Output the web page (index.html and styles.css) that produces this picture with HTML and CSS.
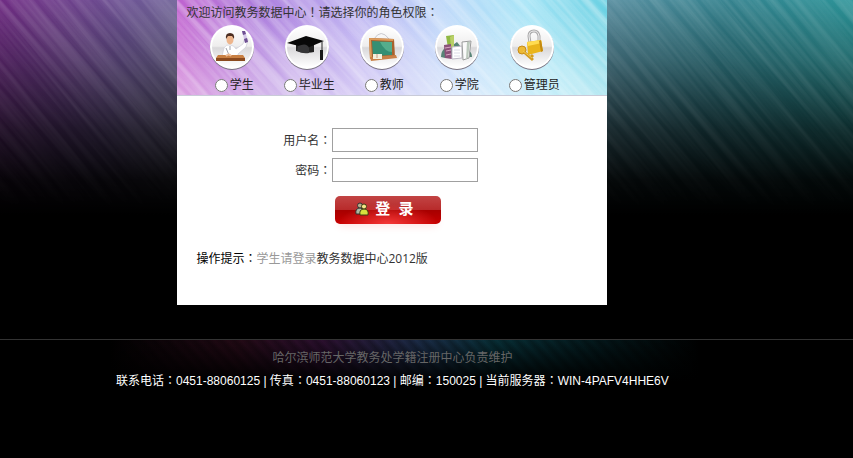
FILE: index.html
```
<!DOCTYPE html>
<html lang="zh-CN">
<head>
<meta charset="utf-8">
<meta name="viewport" content="width=device-width, initial-scale=1">
<title>教务数据中心</title>
<link rel="stylesheet" href="styles.css">
</head>
<body>
<svg class="streaks" aria-hidden="true">
  <defs>
    <filter id="brush" x="0" y="0" width="100%" height="100%">
      <feTurbulence type="fractalNoise" baseFrequency="0.004 0.16" numOctaves="4" seed="4"/>
      <feColorMatrix values="0 0 0 0 1  0 0 0 0 1  0 0 0 0 1  2 0 0 0 -0.6"/>
    </filter>
  </defs>
  <rect x="-600" y="-1400" width="2200" height="2200" filter="url(#brush)" transform="rotate(50)"/>
</svg>
<div class="page">
  <main class="card">
    <form>
      <fieldset class="roles">
        <svg class="roles-texture" aria-hidden="true">
          <rect x="-600" y="-1400" width="2200" height="2200" filter="url(#brush)" transform="rotate(48)"/>
        </svg>
        <legend class="roles-title">欢迎访问教务数据中心<span class="punct" lang="zh-TW">！</span>请选择你的角色权限<span class="punct" lang="zh-TW">：</span></legend>
        <div class="role-list">
          <label class="role">
            <svg class="role-icon" viewBox="0 0 46 46" aria-hidden="true">
              <defs>
                <linearGradient id="disc" x1="0" y1="0" x2="0" y2="1">
                  <stop offset="0" stop-color="#fff"/><stop offset=".48" stop-color="#eeeded"/>
                  <stop offset=".52" stop-color="#d9d8da"/><stop offset="1" stop-color="#fff"/>
                </linearGradient>
              </defs>
              <circle cx="23" cy="24" r="22" fill="#77717f"/>
              <circle cx="23" cy="23" r="22" fill="#fff"/>
              <circle cx="23" cy="23" r="20" fill="url(#disc)"/>
              <path d="M13 32 15 24Q17 20 21 21Q25 21 27 25L34 20 36 13 39 16 37 23 29 30 29 33Z" fill="#fff" stroke="#cdcdd9" stroke-width=".7"/>
              <path d="M17 24 20 31M21 22v4" stroke="#a2a3ad" fill="none"/>
              <ellipse cx="21" cy="15.500" rx="3.500" ry="5" fill="#edb58c"/>
              <path d="M17 15Q16 9 21 9Q26 9 25 15L23 12 19 12Z" fill="#4b2d20"/>
              <path d="m33 7 3 0 3 10-3 2Z" fill="#d4c7e8"/><path d="m33 7 3 0 1 3-3 1Zm2 8 3-1 1 4-3 1Z" fill="#6e5092"/>
              <path d="M9 31h25l2 3H7Z" fill="#c98043"/><path d="M7 34h29v3H7Z" fill="#8b4a1f"/>
              <path d="M17 32q3-3 5 0" stroke="#eebf9c" fill="none" stroke-width="2"/>
            </svg>
            <span class="role-name"><input type="radio" name="role" value="student">学生</span>
          </label>
          <label class="role">
            <svg class="role-icon" viewBox="0 0 46 46" aria-hidden="true">
              <circle cx="23" cy="24" r="22" fill="#77717f"/>
              <circle cx="23" cy="23" r="22" fill="#fff"/>
              <circle cx="23" cy="23" r="20" fill="url(#disc)"/>
              <path d="M12 20v7q11 3 18 1v-8Z" fill="#222"/>
              <path d="M3 19 22 12 40 17 23 24Z" fill="#080808"/>
              <path d="M14 22q9-4 11 2v5q-7 1-12-2Z" fill="#353537"/>
              <path d="M38 18v9" stroke="#222" fill="none"/>
              <path d="M36 26h3v10h-3Z" fill="#171717"/>
            </svg>
            <span class="role-name"><input type="radio" name="role" value="graduate">毕业生</span>
          </label>
          <label class="role">
            <svg class="role-icon" viewBox="0 0 46 46" aria-hidden="true">
              <circle cx="23" cy="24" r="22" fill="#77717f"/>
              <circle cx="23" cy="23" r="22" fill="#fff"/>
              <circle cx="23" cy="23" r="20" fill="url(#disc)"/>
              <path d="M15 15q7-11 15 0" stroke="#c9c9ce" fill="none"/>
              <path d="M10 14 35 15 36 33 11 35Z" fill="#a8622e"/>
              <path d="M10 14 35 15 34 17 12 16 13 34 11 35Z" fill="#dc9c5c"/>
              <path d="M13 17 33 18 33 31 14 32Z" fill="#358f73"/>
              <path d="M21 18 33 18 33 28Q26 28 21 18Z" fill="#55ad8c"/>
              <path d="m11 33 26-2 1 3-26 3Z" fill="#c98046"/>
              <path d="M14 30h9v5h-9Z" fill="#f6f1dc"/><path d="M18 30v4" stroke="#cb9c82"/>
            </svg>
            <span class="role-name"><input type="radio" name="role" value="teacher">教师</span>
          </label>
          <label class="role">
            <svg class="role-icon" viewBox="0 0 46 46" aria-hidden="true">
              <circle cx="23" cy="24" r="22" fill="#77717f"/>
              <circle cx="23" cy="23" r="22" fill="#fff"/>
              <circle cx="23" cy="23" r="20" fill="url(#disc)"/>
              <path d="M7 33q0-6 4-9v10Zm9-10 7-5 4 5v10H16Zm18 3q4 2 4 7h-5Z" fill="#588577"/>
              <path d="M12 12 20 11 20 24 14 24Z" fill="#90b842"/><path d="m16 13 4-2v12h-3Z" fill="#b9cf66"/>
              <path d="M10 21 17 20 18 35 11 34Z" fill="#8b5279"/><path d="m11 24 6-1m-5 4 5-1m-5 5 5-1" stroke="#d8a6c1"/>
              <path d="M18 23 28 22 28 34 18 35Z" fill="#fff" stroke="#bdb9c5"/>
              <path d="M20 26h6m-6 3h6m-6 3h6" stroke="#dddce7"/>
              <path d="m28 18 9-1-2 17-6 2Z" fill="#fafafa" stroke="#9b9c9c"/><path d="m33 18 3 0-2 16-2 1Z" fill="#bcc9bd"/>
            </svg>
            <span class="role-name"><input type="radio" name="role" value="college">学院</span>
          </label>
          <label class="role">
            <svg class="role-icon" viewBox="0 0 46 46" aria-hidden="true">
              <circle cx="23" cy="24" r="22" fill="#77717f"/>
              <circle cx="23" cy="23" r="22" fill="#fff"/>
              <circle cx="23" cy="23" r="20" fill="url(#disc)"/>
              <path d="M21 19 20 12Q20 7 25 7Q29 7 30 12L30 18" stroke="#aaa9aa" stroke-width="3" fill="none"/>
              <path d="M21 19 20 12Q20 7 25 7Q29 7 30 12L30 18" stroke="#f0f0f0" fill="none"/>
              <path d="m18 18 14-2 2 11-15 4Z" fill="#eab51b"/><path d="m18 18 14-2 1 3-14 3Z" fill="#ffdc50"/>
              <path d="m30 17 2-1 2 11-2 1Z" fill="#c48a12"/>
              <circle cx="13" cy="26" r="4" fill="#edb936" stroke="#c78b18"/>
              <path d="m15 28 9 8m-3-2 3-3" stroke="#d39b1f" stroke-width="3" fill="none"/>
              <path d="m14 27 9 7" stroke="#f3ca50" fill="none"/>
            </svg>
            <span class="role-name"><input type="radio" name="role" value="admin">管理员</span>
          </label>
        </div>
      </fieldset>
      <div class="fields">
        <label for="user">用户名<span class="punct" lang="zh-TW">：</span></label>
        <input class="field" id="user" type="text" name="user">
        <label for="password">密码<span class="punct" lang="zh-TW">：</span></label>
        <input class="field" id="password" type="password" name="password">
        <button class="login" type="submit">
          <svg class="login-icon" viewBox="0 0 14 14" aria-hidden="true">
            <path d="M1 12Q0 7 4 6H6Q9 7 8 12Z" fill="#aeb8a2" stroke="#333"/>
            <circle cx="5" cy="3.500" r="2.500" fill="#b9ad8a" stroke="#333"/>
            <path d="M5 13Q4 8 8 7H10Q14 8 13 13Z" fill="#d7df3e" stroke="#3c3c10"/>
            <circle cx="9" cy="4.500" r="2.500" fill="#f5e58a" stroke="#3c3c10"/>
          </svg>
          登&nbsp;&nbsp;录
        </button>
      </div>
    </form>
    <p class="hint"><span class="hint-title">操作提示<span class="punct" lang="zh-TW">：</span></span><span class="hint-who">学生请登录</span>教务数据中心2012版</p>
  </main>
</div>
<footer class="footer">
  <p class="owner">哈尔滨师范大学教务处学籍注册中心负责维护</p>
  <p class="contact">联系电话<span class="punct" lang="zh-TW">：</span>0451-88060125 | 传真<span class="punct" lang="zh-TW">：</span>0451-88060123 | 邮编<span class="punct" lang="zh-TW">：</span>150025 | 当前服务器<span class="punct" lang="zh-TW">：</span>WIN-4PAFV4HHE6V</p>
</footer>
</body>
</html>
```
FILE: styles.css
```
* {
  box-sizing: border-box;
}

body {
  margin: 0;
  min-height: 100vh;
  position: relative;
  overflow-x: hidden;
  background:
    linear-gradient(to bottom, rgba(0, 0, 0, 0) 0, rgba(0, 0, 0, 0.3) 60px, rgba(0, 0, 0, 0.72) 130px, rgba(0, 0, 0, 0.94) 180px, #000 215px),
    linear-gradient(100deg, #702c84 0, #6c5494 14%, #8484a8 24%, #6894a8 60%, #34828e 78%, #28a0a0 100%);
  color: #333;
  font: 12px/16px "Open Sans", "Noto Sans CJK SC", sans-serif;
}

.punct {
  font-family: "Noto Sans CJK TC", sans-serif;
}

.streaks {
  position: absolute;
  top: 0;
  left: 0;
  z-index: -1;
  width: 100%;
  height: 210px;
  opacity: 0.16;
  -webkit-mask-image: linear-gradient(#000, transparent);
  mask-image: linear-gradient(#000, transparent);
}

.page,
.footer {
  padding-right: 8%;
}

.card {
  max-width: 430px;
  min-height: 305px;
  margin: 0 auto;
  background: #fff;
}

.roles {
  position: relative;
  min-width: 0;
  height: 96px;
  margin: 0;
  padding: 4px 9px 0;
  border: 0;
  border-bottom: 1px solid #c9cbd8;
  background:
    linear-gradient(to bottom, rgba(255, 255, 255, 0) 10%, rgba(255, 255, 255, 0.4) 100%),
    linear-gradient(78deg, #c45ccc 0, #ac7cdc 22%, #bcaef0 42%, #c0d8fa 62%, #a4e4f6 82%, #68d0e2 100%);
}

.roles-texture {
  position: absolute;
  top: 0;
  left: 0;
  width: 100%;
  height: 100%;
  opacity: 0.35;
}

.roles-title {
  position: relative;
  float: left;
  width: 100%;
  padding: 0;
}

.role-list {
  position: relative;
  clear: both;
  display: flex;
  padding: 3px 8px 0;
}

.role {
  display: flex;
  flex-direction: column;
  align-items: center;
  gap: 7px;
  width: 75px;
  color: #222;
}

.role-icon {
  width: 46px;
  height: 46px;
}

.role-name {
  display: flex;
  align-items: center;
}

.role-name input {
  width: 13px;
  height: 13px;
  margin: 0 2px 0 5px;
}

.fields {
  display: grid;
  grid-template-columns: 154px 146px;
  align-items: center;
  column-gap: 1px;
  row-gap: 6px;
  padding-top: 32px;
}

.fields label {
  text-align: right;
}

.field {
  width: 100%;
  height: 24px;
  padding: 2px 4px;
  border: 1px solid #a0a0a0;
  background: #fff;
  font: inherit;
}

.login {
  grid-column: 2;
  display: flex;
  align-items: center;
  justify-content: center;
  gap: 6px;
  width: 106px;
  height: 28px;
  margin: 8px 0 0 3px;
  padding: 0 8px 2px 0;
  border: 0;
  border-radius: 5px;
  background:
    radial-gradient(ellipse 50px 20px at 50% 100%, rgba(255, 70, 70, 0.8), rgba(255, 0, 0, 0)),
    linear-gradient(#c24444 0, #b82b2b 49%, #a60000 50%, #c80000 100%);
  box-shadow: 0 6px 8px -4px #ffe2e2;
  color: #fff;
  font: bold 15px/20px "Liberation Sans", "Noto Sans CJK SC", sans-serif;
}

.login-icon {
  width: 14px;
  height: 14px;
}

.hint {
  margin: 0;
  padding: 26px 19px 0;
}

.hint-title {
  color: #000;
}

.hint-who {
  color: #999;
}

.footer {
  margin-top: 34px;
  padding-top: 10px;
  border-top: 1px solid #333;
  background:
    linear-gradient(to bottom, rgba(0, 0, 0, 0) 0, #000 42px),
    repeating-linear-gradient(-132deg, rgba(0, 0, 0, 0.25) 0, rgba(0, 0, 0, 0) 5px, rgba(0, 0, 0, 0.25) 10px),
    linear-gradient(to right, #000 13%, #240a16 28%, #2c1030 38%, #1c2c48 49%, #083038 58%, #041c20 68%, #000 82%);
  text-align: center;
}

.footer p {
  margin: 0;
}

.owner {
  color: #666;
}

.footer .contact {
  margin-top: 6px;
  color: #fff;
  font-family: "Liberation Sans", "Noto Sans CJK SC", sans-serif;
}
```
